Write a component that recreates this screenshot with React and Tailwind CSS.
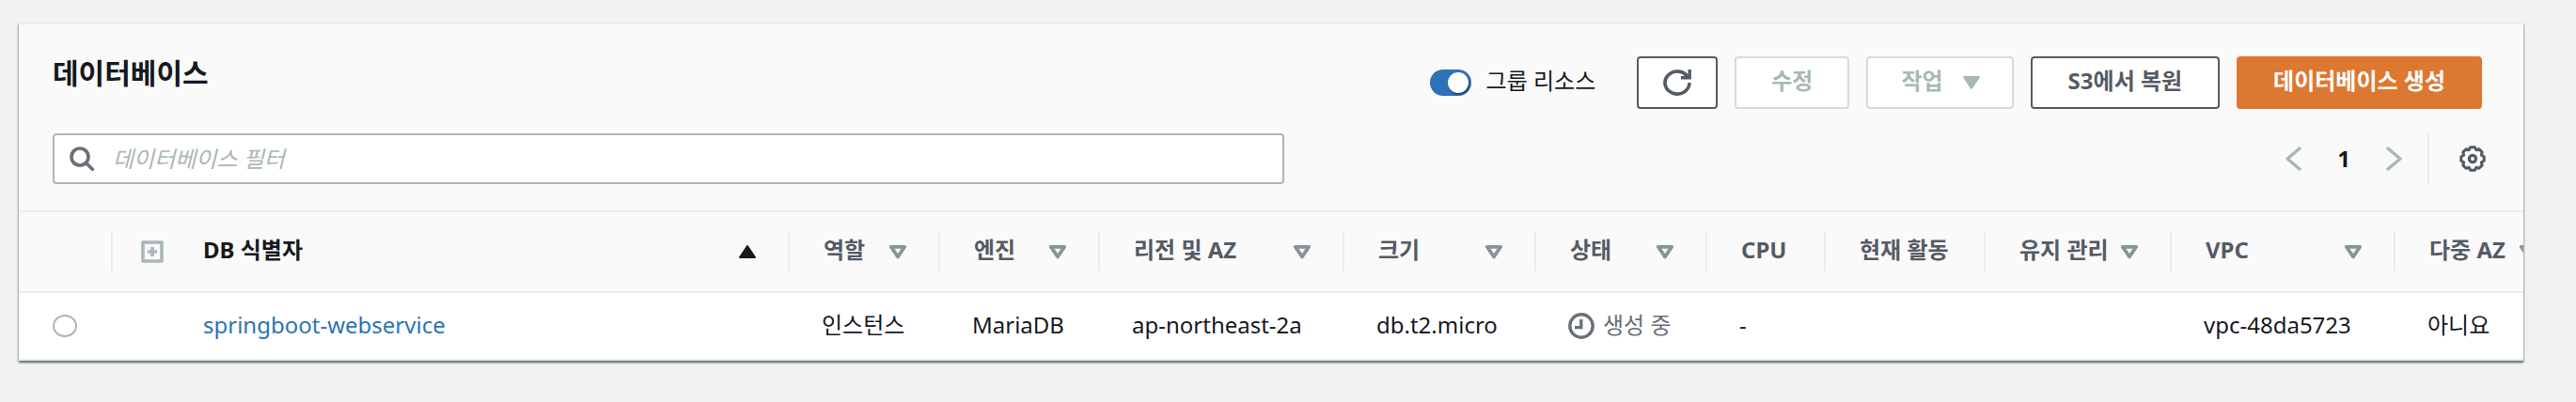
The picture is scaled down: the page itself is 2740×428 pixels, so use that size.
import React from 'react';

const columns = [
    { label: 'DB 식별자', width: 'w-[658px]', sort: 'asc' },
    { label: '역할', width: 'w-[160px]', sort: 'none' },
    { label: '엔진', width: 'w-[170px]', sort: 'none' },
    { label: '리전 및 AZ', width: 'w-[260px]', sort: 'none' },
    { label: '크기', width: 'w-[204px]', sort: 'none' },
    { label: '상태', width: 'w-[182px]', sort: 'none' },
    { label: 'CPU', width: 'w-[126px]' },
    { label: '현재 활동', width: 'w-[170px]' },
    { label: '유지 관리', width: 'w-[198px]', sort: 'none' },
    { label: 'VPC', width: 'w-[238px]', sort: 'none' },
    { label: '다중 AZ', width: 'w-[186px]', sort: 'none' },
];

const databases = [
    {
        id: 'springboot-webservice',
        role: '인스턴스',
        engine: 'MariaDB',
        region: 'ap-northeast-2a',
        size: 'db.t2.micro',
        status: '생성 중',
        cpu: '-',
        activity: '',
        maintenance: '',
        vpc: 'vpc-48da5723',
        multiAz: '아니요',
    },
];

const SortIcon = ({ sort }) => {
    if (sort === 'asc') {
        return (
            <svg className="w-5 h-4 shrink-0" viewBox="0 0 20 16" aria-hidden="true">
                <path d="M10 2 18 14H2Z" fill="#16191f" stroke="#16191f" strokeWidth="2" strokeLinejoin="round" />
            </svg>
        );
    }
    return (
        <svg className="w-5 h-4 shrink-0" viewBox="0 0 20 16" aria-hidden="true">
            <path d="M2.8 2.8H17.2L10 13.4Z" fill="none" stroke="#879596" strokeWidth="3.8" strokeLinejoin="round" />
        </svg>
    );
};

const SearchIcon = () => (
    <svg className="w-7 h-7 shrink-0" viewBox="0 0 28 28" fill="none" stroke="#687078" strokeWidth="3.6" aria-hidden="true">
        <circle cx="11" cy="12" r="9" />
        <path d="M17.4 18.4 24.4 25.2" strokeLinecap="round" />
    </svg>
);

const RefreshIcon = () => (
    <svg className="w-[30px] h-7" viewBox="0 0 30 28" fill="none" stroke="#545b64" strokeWidth="3.6" aria-hidden="true">
        <path d="M28 14A13 12 0 1 1 26.6 8.6" />
        <path d="M19 8.7H28.2V0" strokeWidth="3.4" />
    </svg>
);

const SettingsIcon = () => (
    <svg className="w-7 h-7" viewBox="0 0 28 28" fill="none" stroke="#545b64" strokeWidth="3" strokeLinejoin="round" aria-hidden="true">
        <path d="M11.7 1.8H16.3L17.9 4.7 20.9 3.8 24.2 7.1 23.3 10.1 26.2 11.7V16.3L23.3 17.9 24.2 20.9 20.9 24.2 17.9 23.3 16.3 26.2H11.7L10.1 23.3 7.1 24.2 3.8 20.9 4.7 17.9 1.8 16.3V11.7L4.7 10.1 3.8 7.1 7.1 3.8 10.1 4.7Z" />
        <circle cx="14" cy="14" r="3.6" strokeWidth="3.2" />
    </svg>
);

const PendingIcon = () => (
    <svg className="w-7 h-7 shrink-0" viewBox="0 0 28 28" fill="none" stroke="#687078" strokeWidth="3.4" aria-hidden="true">
        <circle cx="14" cy="14" r="12.2" />
        <path d="M13.8 7V15.6H7" />
    </svg>
);

const Chevron = ({ d }) => (
    <svg className="w-[18px] h-7" viewBox="0 0 18 28" fill="none" stroke="#aab7b8" strokeWidth="3.4" strokeLinecap="round" strokeLinejoin="round" aria-hidden="true">
        <path d={d} />
    </svg>
);

const Toolbar = () => {
    return (
        <div className="bg-[#fafafa] border-b-2 border-[#eaeded] pl-9 pr-10 pt-[34px] pb-7">
            <div className="flex items-start justify-between pr-1">
                <h1 className="text-[30px] leading-9 font-bold">데이터베이스</h1>

                <div className="flex items-center gap-[18px] font-bold">
                    <label className="flex items-center gap-4 mr-[26px] font-normal">
                        <input
                            type="checkbox"
                            role="switch"
                            defaultChecked
                            className="appearance-none flex items-center justify-end w-11 h-7 pr-[3px] rounded-full bg-[#2e73b8] before:w-[22px] before:h-[22px] before:rounded-full before:bg-white before:shadow-[1px_2px_2px_rgba(0,28,36,0.5)]"
                        />
                        <span className="pb-1">그룹 리소스</span>
                    </label>
                    <button aria-label="새로 고침" className="flex items-center justify-center w-[86px] h-14 bg-white border-2 border-[#545b64] rounded-sm">
                        <RefreshIcon />
                    </button>
                    <button disabled className="h-14 px-[37px] pb-1 bg-white border-2 border-[#d5dbdb] rounded-sm text-[#aab7b8]">
                        수정
                    </button>
                    <button disabled className="flex items-center gap-5 h-14 pl-[35px] pr-[33px] bg-white border-2 border-[#d5dbdb] rounded-sm text-[#aab7b8]">
                        <span className="pb-1">작업</span>
                        <svg className="w-5 h-4" viewBox="0 0 20 16" aria-hidden="true">
                            <path d="M2 2H18L10 14Z" fill="#aab7b8" stroke="#aab7b8" strokeWidth="2" strokeLinejoin="round" />
                        </svg>
                    </button>
                    <button className="h-14 px-[38px] pb-1 bg-white border-2 border-[#545b64] rounded-sm text-[#545b64]">
                        S3에서 복원
                    </button>
                    <button className="h-14 px-[37px] pb-1 bg-[#dd7831] border-2 border-[#dd7831] rounded-sm text-white">
                        데이터베이스 생성
                    </button>
                </div>
            </div>

            <div className="flex items-center justify-between mt-[26px]">
                <label className="flex items-center gap-[18px] w-[1310px] h-[54px] px-4 bg-white border-2 border-[#aab7b8] rounded-sm">
                    <SearchIcon />
                    <input
                        type="text"
                        aria-label="데이터베이스 필터"
                        placeholder="데이터베이스 필터"
                        className="flex-1 outline-none placeholder:italic placeholder:text-[#aab7b8]"
                    />
                </label>

                <div className="flex items-center">
                    <nav aria-label="페이지" className="flex items-center gap-[38px] pr-[26px]">
                        <button aria-label="이전 페이지"><Chevron d="M16 3 3 14 16 25" /></button>
                        <button className="font-bold">1</button>
                        <button aria-label="다음 페이지"><Chevron d="M2 3 15 14 2 25" /></button>
                    </nav>
                    <div className="flex items-center h-[54px] pl-8 border-l-2 border-[#eaeded]">
                        <button aria-label="기본 설정"><SettingsIcon /></button>
                    </div>
                </div>
            </div>
        </div>
    );
};

const HeaderCell = ({ column, first, last }) => {
    const border = last ? 'border-transparent' : 'border-[#eaeded]';
    const padding = first ? 'pl-[34px]' : 'pl-9';
    const color = column.sort === 'asc' ? 'text-[#16191f]' : 'text-[#545b64]';

    return (
        <th scope="col" className="p-0 font-bold">
            <div className={`flex items-center h-[42px] pr-[33px] border-r-2 ${border} ${padding} ${color}`}>
                {column.sort ? (
                    <button className="flex items-center justify-between w-full whitespace-nowrap">
                        <span className="pb-1">{column.label}</span>
                        <SortIcon sort={column.sort} />
                    </button>
                ) : (
                    <span className="pb-1 whitespace-nowrap">{column.label}</span>
                )}
            </div>
        </th>
    );
};

const DatabaseTable = () => {
    return (
        <div className="overflow-hidden">
            <table className="table-fixed w-full min-w-[2714px] text-left whitespace-nowrap">
                <colgroup>
                    <col className="w-[100px]" />
                    <col className="w-[62px]" />
                    {columns.map((column) => (
                        <col key={column.label} className={column.width} />
                    ))}
                </colgroup>
                <thead>
                    <tr className="h-[85px] bg-[#fafafa] border-b-2 border-[#eaeded]">
                        <td className="p-0">
                            <div className="h-[42px] border-r-2 border-[#eaeded]"></div>
                        </td>
                        <td className="p-0 pl-[30px]">
                            <button aria-label="모두 확장" className="block">
                                <svg className="w-6 h-6" viewBox="0 0 24 24" fill="none" stroke="#aab7b8" strokeWidth="3.6" aria-hidden="true">
                                    <rect x="2" y="2" width="20" height="20" strokeLinejoin="round" />
                                    <path d="M12 7V17M7 12H17" />
                                </svg>
                            </button>
                        </td>
                        {columns.map((column, i) => (
                            <HeaderCell key={column.label} column={column} first={i === 0} last={i === columns.length - 1} />
                        ))}
                    </tr>
                </thead>
                <tbody>
                    {databases.map((db) => (
                        <tr key={db.id} className="h-[72px] bg-white border-b-2 border-[#eaeded]">
                            <td className="p-0 pl-9">
                                <input
                                    type="radio"
                                    name="database"
                                    aria-label={db.id}
                                    className="block appearance-none w-[26px] h-6 bg-white border-2 border-[#aab7b8] rounded-[50%]"
                                />
                            </td>
                            <td></td>
                            <td className="p-0 pl-[34px] pb-0.5">
                                <a href="#" className="text-[#2e73b8]">{db.id}</a>
                            </td>
                            <td className="p-0 pl-[34px] pb-0.5">{db.role}</td>
                            <td className="p-0 pl-[34px] pb-0.5">{db.engine}</td>
                            <td className="p-0 pl-[34px] pb-0.5">{db.region}</td>
                            <td className="p-0 pl-[34px] pb-0.5">{db.size}</td>
                            <td className="p-0 pl-[34px]">
                                <span className="flex items-center gap-[9px] text-[#687078]">
                                    <PendingIcon />
                                    <span className="pb-0.5">{db.status}</span>
                                </span>
                            </td>
                            <td className="p-0 pl-[34px] pb-0.5">{db.cpu}</td>
                            <td className="p-0 pl-[34px] pb-0.5">{db.activity}</td>
                            <td className="p-0 pl-[34px] pb-0.5">{db.maintenance}</td>
                            <td className="p-0 pl-[34px] pb-0.5">{db.vpc}</td>
                            <td className="p-0 pl-[34px] pb-0.5">{db.multiAz}</td>
                        </tr>
                    ))}
                </tbody>
            </table>
        </div>
    );
};

const App = () => {
    return (
        <div className="min-h-screen pt-6 pl-5 pr-14 bg-[#f1f3f3] text-[#16191f] text-2xl leading-8 font-['Noto_Sans','Noto_Sans_CJK_KR',sans-serif]">
            <section className="border-t-2 border-[#eaeded] shadow-[0_2px_2px_rgba(0,28,36,0.4),1px_2px_2px_rgba(0,28,36,0.2),-1px_2px_2px_rgba(0,28,36,0.2)]">
                <Toolbar />
                <DatabaseTable />
            </section>
        </div>
    );
};

export default App;
